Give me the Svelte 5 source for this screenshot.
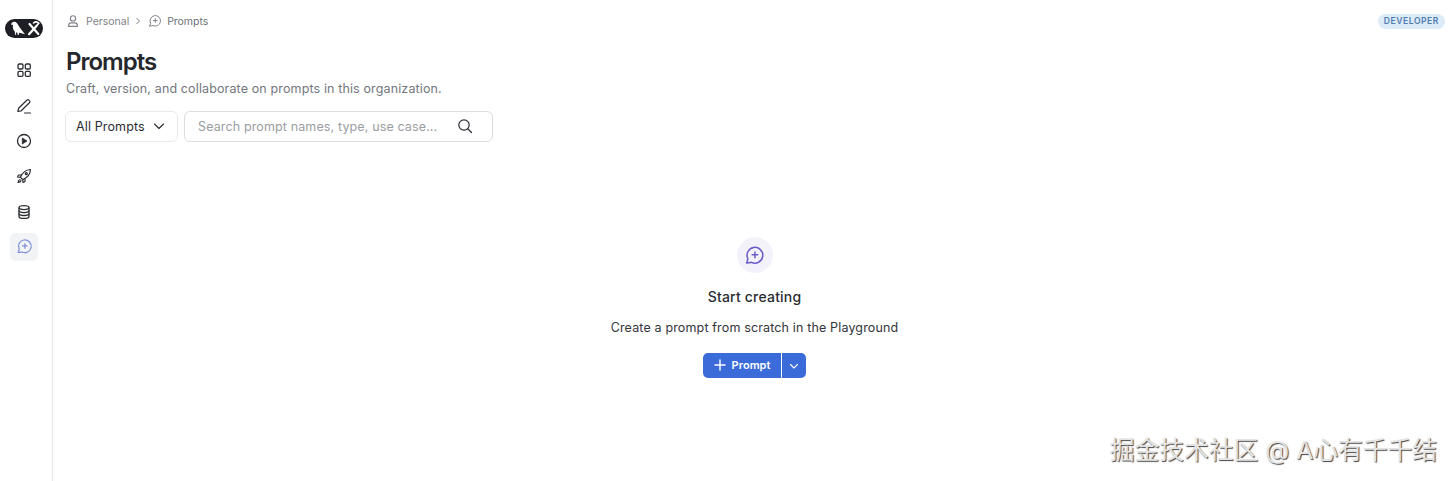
<script>
  const navItems = ['grid', 'edit', 'play', 'rocket', 'db', 'prompt'];
</script>

{#snippet promptIcon(size)}
  <svg width={size} height={size} viewBox="0 0 24 24" fill="none" stroke="currentColor" stroke-width="1.7" stroke-linecap="round" stroke-linejoin="round">
    <path d="M3 20.500l1.500-4.600A9 9 0 1 1 8.500 19.800c-1.800.5-3.700.7-5.500.7z" />
    <path d="M12.500 8v6.500M9.300 11.200h6.400" />
  </svg>
{/snippet}

<div class="page">
  <aside class="sidebar">
    <div class="logo">
      <svg width="38" height="19" viewBox="0 0 38 19">
        <rect width="38" height="19" rx="9.5" fill="#1d1f24" />
        <path d="M6 5.500C6.500 3.500 8.500 2 10.500 3c1.500.8 2.500 2.500 3.500 4.500l3 4 3 3.800-4.500-1.200-1.500-.3-.3 2.300h-1l-.4-2.500-1.300-.2-.3 2.700H10l-.2-3.500C8 11 7.500 8 8 6z" fill="#fff" />
        <g stroke="#fff" stroke-linecap="round" fill="none">
          <path d="M24 15.200l7.500-8.200" stroke-width="2.200" />
          <path d="M24.500 5l8.800 10" stroke-width="2.200" />
          <path d="M28.500 4c1.700-1.400 4-1.200 5.300.3l-2.400 2.600" stroke-width="1.600" />
        </g>
      </svg>
    </div>
    <nav class="nav">
      {#each navItems as item}
        <div class="nav-item" class:active={item === 'prompt'}>
          {#if item === 'grid'}
            <svg width="16" height="16" viewBox="0 0 16 16" fill="none" stroke="currentColor" stroke-width="1.300">
              <rect x="2" y="2" width="5" height="5" rx="1.200" />
              <rect x="9.300" y="2" width="5" height="5" rx="1.200" />
              <rect x="2" y="9.300" width="5" height="5" rx="1.200" />
              <rect x="9.300" y="9.300" width="5" height="5" rx="1.200" />
            </svg>
          {:else if item === 'edit'}
            <svg class="edit-icon" width="16" height="16" viewBox="0 -1.500 16 16" fill="none" stroke="currentColor" stroke-width="1.200" stroke-linecap="round" stroke-linejoin="round">
              <path d="M1.800 13l.8-3.200L10.800 1.700a1.500 1.500 0 0 1 2.200 0l.4.400a1.500 1.500 0 0 1 0 2.200L5.200 12.300z" />
              <path d="M8.500 14.500h6" />
            </svg>
          {:else if item === 'play'}
            <svg width="16" height="16" viewBox="0 0 16 16" fill="none" stroke="currentColor" stroke-width="1.300">
              <circle cx="8" cy="8" r="6.500" />
              <path d="M6.300 5v6l4.700-3z" fill="currentColor" stroke-linejoin="round" stroke-width="0.800" />
            </svg>
          {:else if item === 'rocket'}
            <svg width="16" height="16" viewBox="0 0 16 16" fill="none" stroke="currentColor" stroke-width="1.200" stroke-linecap="round" stroke-linejoin="round">
              <path d="M5.500 10.500l-1-1.500C6.500 4.500 10 1.800 14.500 1.500c-.2 4.500-3 8-7.500 10z" />
              <path d="M5 7H2.500L1.500 9l3 .3M9 11v2.500L7 14.500l-.3-3" />
              <path d="M4 11.500c-1.200.3-1.800 1.300-2 3 1.700-.2 2.700-.8 3-2" />
              <circle cx="10.300" cy="5.700" r="1" />
            </svg>
          {:else if item === 'db'}
            <svg width="16" height="16" viewBox="0 0 16 16" fill="none" stroke="currentColor" stroke-width="1.300">
              <ellipse cx="8" cy="3.600" rx="5" ry="2" />
              <path d="M3 3.600v8.800c0 1.100 2.200 2 5 2s5-.9 5-2V3.600" />
              <path d="M3 6.600c0 1.100 2.200 2 5 2s5-.9 5-2M3 9.500c0 1.100 2.200 2 5 2s5-.9 5-2" />
            </svg>
          {:else}
            {@render promptIcon(17)}
          {/if}
        </div>
      {/each}
    </nav>
  </aside>

  <main class="main">
    <header class="topbar">
      <div class="crumbs">
        <svg width="14" height="14" viewBox="0 0 16 16" fill="none" stroke="currentColor" stroke-width="1.300" stroke-linecap="round">
          <circle cx="8" cy="5" r="3" />
          <path d="M3 14.200v-1c0-2 1.500-3 3-3h4c1.500 0 3 1 3 3v1z" stroke-linejoin="round" />
        </svg>
        <span class="crumb-label">Personal</span>
        <svg class="sep" width="8" height="8" viewBox="0 0 8 8" fill="none" stroke="currentColor" stroke-width="1"><path d="M2.500 1l3 3-3 3" /></svg>
        <span class="crumb-icon">{@render promptIcon(14)}</span>
        <span class="crumb-last">Prompts</span>
      </div>
      <span class="badge">DEVELOPER</span>
    </header>

    <h1>Prompts</h1>
    <p class="subtitle">Craft, version, and collaborate on prompts in this organization.</p>

    <div class="filters">
      <button class="select">
        All Prompts
        <svg width="14" height="14" viewBox="0 0 14 14" fill="none" stroke="currentColor" stroke-width="1.100" stroke-linecap="round" stroke-linejoin="round"><path d="M2.500 5L7 9.500 11.500 5" /></svg>
      </button>
      <div class="search">
        <span class="placeholder">Search prompt names, type, use case...</span>
        <svg width="16" height="16" viewBox="0 0 16 16" fill="none" stroke="currentColor" stroke-width="1.200" stroke-linecap="round"><circle cx="7" cy="7" r="5.200" /><path d="M11 11l3.500 3.500" /></svg>
      </div>
    </div>

    <section class="empty">
      <div class="empty-icon">{@render promptIcon(21)}</div>
      <h2>Start creating</h2>
      <p>Create a prompt from scratch in the Playground</p>
      <div class="split">
        <button class="split-main">
          <svg width="12" height="12" viewBox="0 0 12 12" fill="none" stroke="currentColor" stroke-width="1.400" stroke-linecap="round"><path d="M6 1v10M1 6h10" /></svg>
          Prompt
        </button>
        <button class="split-more" aria-label="More">
          <svg width="10" height="10" viewBox="0 0 10 10" fill="none" stroke="currentColor" stroke-width="1.100" stroke-linecap="round" stroke-linejoin="round"><path d="M1.500 3.500L5 7l3.500-3.500" /></svg>
        </button>
      </div>
    </section>
  </main>

  <div class="watermark">掘金技术社区 @ A心有千千结</div>
</div>

<style>
  :global(body) {
    margin: 0;
    background: #fff;
  }

  .page {
    display: flex;
    height: 481px;
    overflow: hidden;
    position: relative;
    font-family: Inter, "Noto Sans CJK SC", sans-serif;
    color: #1f2126;
  }

  .sidebar {
    width: 52px;
    flex: none;
    border-right: 1px solid #e6e7ea;
    display: flex;
    flex-direction: column;
    align-items: flex-start;
  }
  .logo {
    height: 19px;
    margin: 19px 0 0 5px;
  }
  .logo svg { display: block; }
  .nav {
    display: flex;
    flex-direction: column;
    gap: 7.400px;
    margin: 18px 0 0 10px;
  }
  .nav-item {
    width: 28px;
    height: 28px;
    border-radius: 5px;
    display: flex;
    align-items: center;
    justify-content: center;
    color: #2b2d33;
  }
  .nav-item.active {
    background: #f2f3f5;
    color: #7b8fd8;
  }
  .edit-icon { overflow: visible; }

  .main {
    flex: 1;
    min-width: 0;
    padding: 0 11px 0 13px;
    display: flex;
    flex-direction: column;
  }

  .topbar {
    display: flex;
    align-items: center;
    justify-content: space-between;
    height: 42px;
  }
  .crumbs {
    display: flex;
    align-items: center;
    font-size: 10.500px;
    color: #80838a;
  }
  .crumb-label { margin-left: 6px; }
  .sep { margin: 0 6px 0 5px; color: #80838a; }
  .crumb-icon { display: flex; margin-right: 5px; }
  .crumb-last { color: #6f7279; letter-spacing: -0.05px; }
  .badge {
    font-size: 8.500px;
    font-weight: 600;
    letter-spacing: 0.6px;
    color: #4f7bb0;
    background: #dcebf8;
    border-radius: 8px;
    padding: 2px 6px;
    line-height: 11px;
    margin-right: -2px;
  }

  h1 {
    margin: 3px 0 0;
    font-size: 24px;
    line-height: 33px;
    font-weight: 600;
    letter-spacing: -1px;
    color: #25272d;
  }
  .subtitle {
    margin: 1px 0 0;
    font-size: 12.500px;
    letter-spacing: 0.13px;
    line-height: 20px;
    color: #73767d;
  }

  .filters {
    display: flex;
    gap: 6px;
    margin-top: 12px;
    height: 31px;
    margin-left: -1px;
    font-size: 12.500px;
    letter-spacing: 0.13px;
  }
  .select {
    width: 113px;
    border: 1px solid #e8e9ec;
    border-radius: 6px;
    background: #fff;
    font: inherit;
    letter-spacing: inherit;
    color: #2b2d33;
    padding: 0 0 1px 10px;
    display: flex;
    align-items: center;
    gap: 7px;
  }
  .search {
    width: 309px;
    box-sizing: border-box;
    border: 1px solid #dcdde1;
    border-radius: 6px;
    display: flex;
    align-items: center;
    justify-content: space-between;
    padding: 0 19px 1px 13px;
    color: #2b2d33;
  }
  .placeholder { color: #9a9da3; }

  .empty {
    display: flex;
    flex-direction: column;
    align-items: center;
    margin-top: 95px;
  }
  .empty-icon {
    width: 36px;
    height: 36px;
    border-radius: 50%;
    background: #f3f2fb;
    color: #6a5cc8;
    display: flex;
    align-items: center;
    justify-content: center;
  }
  h2 {
    margin: 14px 0 0;
    font-size: 14px;
    letter-spacing: 0.2px;
    line-height: 20px;
    font-weight: 500;
    color: #2a2c32;
  }
  .empty p {
    margin: 12px 0 0;
    font-size: 12.500px;
    letter-spacing: 0.15px;
    line-height: 18px;
    color: #33353b;
  }
  .split {
    display: flex;
    margin-top: 16px;
    height: 25px;
  }
  .split button {
    border: none;
    background: #3b6bd8;
    color: #fff;
    font: inherit;
    display: flex;
    align-items: center;
    justify-content: center;
  }
  .split-main {
    width: 78px;
    border-radius: 5px 0 0 5px;
    font-size: 11px !important;
    font-weight: 600 !important;
    letter-spacing: 0.05px;
    gap: 6px;
    padding: 0 6px 2px;
  }
  .split-more {
    width: 24px;
    margin-left: 1px;
    border-radius: 0 5px 5px 0;
  }

  .watermark {
    position: absolute;
    right: 17px;
    top: 435px;
    font-size: 24.750px;
    line-height: 30px;
    color: #e4e4e4;
    text-shadow: 1px 1px 1px #444;
    white-space: nowrap;
  }
</style>
